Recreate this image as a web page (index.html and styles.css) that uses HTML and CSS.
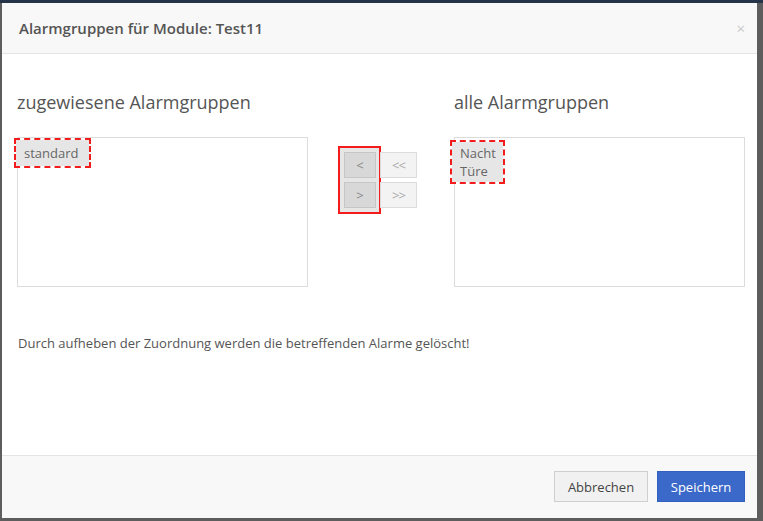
FILE: index.html
```html
<!DOCTYPE html>
<html lang="de">
<head>
    <meta charset="UTF-8">
    <title>Alarmgruppen</title>
    <link rel="stylesheet" href="styles.css">
</head>
<body>
<div class="modal">
    <div class="modal-header">
        <h4 class="modal-title">Alarmgruppen für Module: Test11</h4>
        <span class="close">&times;</span>
    </div>
    <div class="modal-body">
        <div class="picker">
            <div class="col">
                <h3>zugewiesene Alarmgruppen</h3>
                <div class="listbox">
                    <div class="selected">
                        <div class="item">standard</div>
                    </div>
                </div>
            </div>
            <div class="controls">
                <div class="single">
                    <span class="btn-move">&lt;</span>
                    <span class="btn-move">&gt;</span>
                </div>
                <div class="all">
                    <span class="btn-all">&lt;&lt;</span>
                    <span class="btn-all">&gt;&gt;</span>
                </div>
            </div>
            <div class="col">
                <h3>alle Alarmgruppen</h3>
                <div class="listbox">
                    <div class="selected right">
                        <div class="item">Nacht</div>
                        <div class="item">Türe</div>
                    </div>
                </div>
            </div>
        </div>
        <p class="note">Durch aufheben der Zuordnung werden die betreffenden Alarme gelöscht!</p>
    </div>
    <div class="modal-footer">
        <span class="btn btn-default">Abbrechen</span>
        <span class="btn btn-primary">Speichern</span>
    </div>
</div>
</body>
</html>
```

FILE: styles.css
```css
*{
    margin: 0;
    padding: 0;
    box-sizing: border-box;
}
html, body{
    height: 100%;
}
body{
    background-color: #5d5d5d;
    border-top: 3px solid #26344a;
    font-family: "Open Sans", "Liberation Sans", sans-serif;
    color: #555;
    overflow: hidden;
}
.modal{
    margin: 0 6px 0 2px;
    height: 515px;
    background-color: #fff;
    display: flex;
    flex-direction: column;
}
.modal-header{
    height: 51px;
    padding: 0 16px 0 16px;
    background-color: #f8f8f8;
    border-bottom: 1px solid #e4e4e4;
    display: flex;
    align-items: center;
    justify-content: space-between;
}
.modal-title{
    font-size: 15px;
    font-weight: 600;
    color: #555;
    padding-left: 1px;
}
.close{
    font-size: 15px;
    color: #c8c8c8;
    margin-right: -4px;
}
.modal-body{
    flex: 1;
    padding: 38px 15px 0;
}
.picker{
    display: grid;
    grid-template-columns: 291px 146px 291px;
}
.col h3{
    font-size: 18px;
    font-weight: 400;
    line-height: 20px;
    color: #555;
    margin-bottom: 25px;
}
.listbox{
    height: 150px;
    border: 1px solid #dcdcdc;
    padding-top: 2px;
}
/* ausgewaehlte Eintraege mit gestrichelter Markierung */
.selected{
    display: inline-block;
    margin-left: -2px;
    padding: 4px 0 4px;
    background-color: #e6e6e6;
    outline: 2px dashed #f21c1c;
}
.selected .item{
    padding: 0 11px 0 8px;
}
.selected.right{
    margin-left: -3px;
    margin-top: 2px;
    padding: 2px 0 2px;
}
.selected.right .item{
    padding: 0 7px 0 8px;
}
.item{
    font-size: 13px;
    line-height: 18px;
    color: #666;
}
.controls{
    margin-top: 56px;
    padding-left: 32px;
    display: flex;
    align-items: flex-start;
}
.single{
    display: flex;
    flex-direction: column;
    gap: 4px;
    padding: 4px 3px 4px 4px;
    background-color: #e6e6e6;
    outline: 2px solid #f21c1c;
}
.all{
    display: flex;
    flex-direction: column;
    gap: 4px;
    padding-top: 4px;
    margin-left: 1px;
}
.btn-move, .btn-all{
    display: flex;
    align-items: center;
    justify-content: center;
    height: 26px;
    font-size: 13px;
}
.btn-move{
    width: 32px;
    background-color: #d8d8d8;
    border: 1px solid #c6c6c6;
    color: #888;
}
.btn-all{
    width: 37px;
    background-color: #f3f3f3;
    border: 1px solid #dcdcdc;
    color: #aaa;
    letter-spacing: -1px;
}
.note{
    font-size: 13px;
    line-height: 18px;
    margin-top: 47px;
    padding-left: 1px;
    color: #555;
}
.modal-footer{
    height: 63px;
    padding: 15px 12px 0 0;
    background-color: #f8f8f8;
    border-top: 1px solid #e4e4e4;
    display: flex;
    justify-content: flex-end;
    align-items: flex-start;
    gap: 9px;
}
.btn{
    display: inline-flex;
    align-items: center;
    justify-content: center;
    height: 31px;
    font-size: 13px;
}
.btn-default{
    width: 94px;
    background-color: #f1f1f1;
    border: 1px solid #cfcfcf;
    color: #444;
}
.btn-primary{
    width: 88px;
    background-color: #3b69c9;
    border: 1px solid #3260c0;
    color: #fff;
}
```
